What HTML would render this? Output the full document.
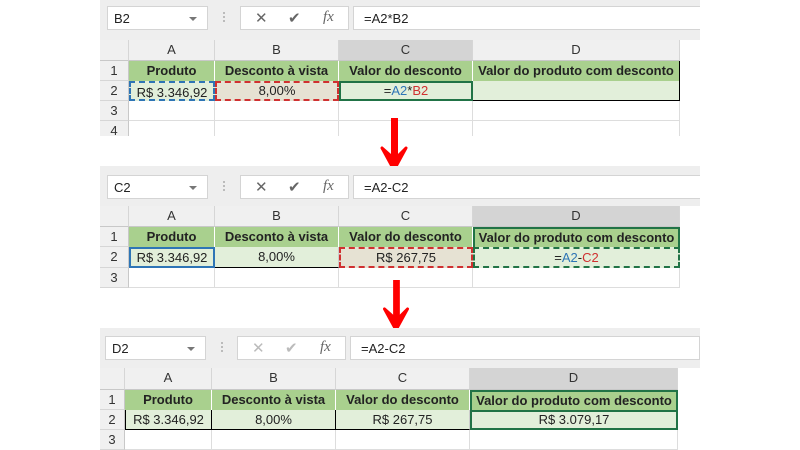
<!DOCTYPE html>
<html><head><meta charset="utf-8"><style>
*{margin:0;padding:0;box-sizing:border-box}
body{width:800px;height:450px;background:#fff;position:relative;overflow:hidden;font-family:"Liberation Sans",sans-serif;color:#222}
.p{position:absolute;left:100px;width:600px;background:#fff;overflow:hidden}
.tb{position:absolute;left:0;top:0;width:600px;height:40px;background:#eeeeee}
.nb{position:absolute;left:7px;top:6px;width:101px;height:24px;background:#fff;border:1px solid #d4d4d4;font-size:13px;padding:4px 0 0 6px}
.nb:after{content:"";position:absolute;right:10px;top:10px;border:4px solid transparent;border-top:4px solid #777}
.dots{position:absolute;left:123px;top:12px;width:2px;height:12px;background:repeating-linear-gradient(#bbb 0 2px,transparent 2px 4px)}
.bx{position:absolute;left:140px;top:6px;width:109px;height:24px;background:#fff;border:1px solid #d4d4d4;font-size:15px;color:#666}
.bx span{position:absolute;top:2px}
.fb{position:absolute;left:253px;top:6px;width:350px;height:24px;background:#fff;border:1px solid #d4d4d4;font-size:13px;padding:4px 0 0 10px}
.c{position:absolute;font-size:13px;text-align:center;line-height:20px;white-space:nowrap}
.ch{background:#f0f0f0;border-right:1px solid #d6d6d6;border-bottom:1px solid #c8c8c8;color:#333}
.rh{background:#f0f0f0;border-bottom:1px solid #d6d6d6;border-right:1px solid #c8c8c8;color:#333;left:0;width:29px}
.h{background:#a9d08e;font-weight:bold;border-right:1px solid #fff}
.d{background:#e2efda;border-right:1px solid #ccc}
.e{border-right:1px solid #ddd;border-bottom:1px solid #ddd}
.arrow{position:absolute;width:30px}
</style></head><body>

<!-- Panel 1 -->
<div class="p" style="top:0;height:136px">
<div class="tb"></div>
<div class="nb">B2</div><div class="dots"></div>
<div class="bx"><span style="left:14px">✕</span><span style="left:47px">✔</span><span style="left:82px;font-style:italic;font-family:'Liberation Serif',serif">fx</span></div>
<div class="fb">=A2*B2</div>
<div class="c ch" style="left:0;top:40px;width:29px;height:21px"></div>
<div class="c ch" style="left:29px;top:40px;width:86px;height:21px">A</div>
<div class="c ch" style="left:115px;top:40px;width:124px;height:21px">B</div>
<div class="c ch" style="left:239px;top:40px;width:134px;height:21px;background:#d4d4d4">C</div>
<div class="c ch" style="left:373px;top:40px;width:207px;height:21px">D</div>
<div class="c rh" style="top:61px;height:20px">1</div>
<div class="c rh" style="top:81px;height:20px">2</div>
<div class="c rh" style="top:101px;height:20px">3</div>
<div class="c rh" style="top:121px;height:20px">4</div>
<div class="c h" style="left:29px;top:61px;width:86px;height:20px">Produto</div>
<div class="c h" style="left:115px;top:61px;width:124px;height:20px">Desconto à vista</div>
<div class="c h" style="left:239px;top:61px;width:134px;height:20px">Valor do desconto</div>
<div class="c h" style="left:373px;top:61px;width:207px;height:20px;border-right:1px solid #000">Valor do produto com desconto</div>
<div class="c d" style="left:29px;top:81px;width:86px;height:20px;border:2px dashed #2e75b6">R$ 3.346,92</div>
<div class="c d" style="left:115px;top:81px;width:124px;height:20px;background:#e6e2d3;border:2px dashed #d03030;line-height:16px">8,00%</div>
<div class="c d" style="left:239px;top:81px;width:134px;height:20px;border:2px solid #217346;border-top-style:solid;line-height:16px">=<span style="color:#2e75b6">A2</span>*<span style="color:#d03030">B2</span></div>
<div class="c d" style="left:373px;top:81px;width:207px;height:20px;border-right:1px solid #000;border-bottom:1px solid #000"></div>
<div class="c e" style="left:29px;top:101px;width:86px;height:20px"></div>
<div class="c e" style="left:115px;top:101px;width:124px;height:20px"></div>
<div class="c e" style="left:239px;top:101px;width:134px;height:20px"></div>
<div class="c e" style="left:373px;top:101px;width:207px;height:20px"></div>
<div class="c e" style="left:29px;top:121px;width:86px;height:20px"></div>
<div class="c e" style="left:115px;top:121px;width:124px;height:20px"></div>
<div class="c e" style="left:239px;top:121px;width:134px;height:20px"></div>
<div class="c e" style="left:373px;top:121px;width:207px;height:20px"></div>
</div>

<!-- Arrow 1 -->
<svg class="arrow" style="left:379px;top:118px" width="30" height="54" viewBox="0 0 30 54"><rect x="12" y="0" width="7" height="40" fill="#f00"/><path d="M3 30 L15 52 L27 30 L19 38 L12 38 Z" fill="#f00" stroke="#f00" stroke-width="3" stroke-linejoin="round"/></svg>

<!-- Panel 2 -->
<div class="p" style="top:166px;height:124px">
<div class="tb"></div>
<div class="nb" style="top:9px">C2</div><div class="dots" style="top:15px"></div>
<div class="bx" style="top:9px"><span style="left:14px">✕</span><span style="left:47px">✔</span><span style="left:82px;font-style:italic;font-family:'Liberation Serif',serif">fx</span></div>
<div class="fb" style="top:9px">=A2-C2</div>
<div class="c ch" style="left:0;top:40px;width:29px;height:21px"></div>
<div class="c ch" style="left:29px;top:40px;width:86px;height:21px">A</div>
<div class="c ch" style="left:115px;top:40px;width:124px;height:21px">B</div>
<div class="c ch" style="left:239px;top:40px;width:134px;height:21px">C</div>
<div class="c ch" style="left:373px;top:40px;width:207px;height:21px;background:#d4d4d4">D</div>
<div class="c rh" style="top:61px;height:20px">1</div>
<div class="c rh" style="top:81px;height:21px">2</div>
<div class="c rh" style="top:102px;height:20px">3</div>
<div class="c h" style="left:29px;top:61px;width:86px;height:20px">Produto</div>
<div class="c h" style="left:115px;top:61px;width:124px;height:20px">Desconto à vista</div>
<div class="c h" style="left:239px;top:61px;width:134px;height:20px">Valor do desconto</div>
<div class="c h" style="left:373px;top:61px;width:207px;height:20px;border:2px solid #217346;border-bottom:none;line-height:18px">Valor do produto com desconto</div>
<div class="c d" style="left:29px;top:81px;width:86px;height:21px;border:2px solid #2e75b6;line-height:17px">R$ 3.346,92</div>
<div class="c d" style="left:115px;top:81px;width:124px;height:21px;border-bottom:1px solid #000">8,00%</div>
<div class="c d" style="left:239px;top:81px;width:134px;height:21px;background:#e6e2d3;border:2px dashed #d03030;line-height:17px">R$ 267,75</div>
<div class="c d" style="left:373px;top:81px;width:207px;height:21px;border:2px dashed #217346;line-height:17px">=<span style="color:#2e75b6">A2</span>-<span style="color:#d03030">C2</span></div>
<div class="c e" style="left:29px;top:102px;width:86px;height:20px"></div>
<div class="c e" style="left:115px;top:102px;width:124px;height:20px"></div>
<div class="c e" style="left:239px;top:102px;width:134px;height:20px"></div>
<div class="c e" style="left:373px;top:102px;width:207px;height:20px"></div>
</div>

<!-- Arrow 2 -->
<svg class="arrow" style="left:381px;top:280px" width="30" height="52" viewBox="0 0 30 54"><rect x="12" y="0" width="7" height="40" fill="#f00"/><path d="M3 30 L15 52 L27 30 L19 38 L12 38 Z" fill="#f00" stroke="#f00" stroke-width="3" stroke-linejoin="round"/></svg>

<!-- Panel 3 -->
<div class="p" style="top:328px;height:122px">
<div class="tb"></div>
<div class="nb" style="top:8px;left:5px">D2</div><div class="dots" style="top:14px;left:121px"></div>
<div class="bx" style="top:8px;left:137px;color:#bbb"><span style="left:14px">✕</span><span style="left:47px">✔</span><span style="left:82px;font-style:italic;color:#666;font-family:'Liberation Serif',serif">fx</span></div>
<div class="fb" style="top:8px;left:250px">=A2-C2</div>
<div class="c ch" style="left:0;top:40px;width:25px;height:22px"></div>
<div class="c ch" style="left:25px;top:40px;width:87px;height:22px">A</div>
<div class="c ch" style="left:112px;top:40px;width:124px;height:22px">B</div>
<div class="c ch" style="left:236px;top:40px;width:134px;height:22px">C</div>
<div class="c ch" style="left:370px;top:40px;width:208px;height:22px;background:#d4d4d4">D</div>
<div class="c rh" style="top:62px;height:20px;width:25px">1</div>
<div class="c rh" style="top:82px;height:20px;width:25px">2</div>
<div class="c rh" style="top:102px;height:20px;width:25px">3</div>
<div class="c h" style="left:25px;top:62px;width:87px;height:20px">Produto</div>
<div class="c h" style="left:112px;top:62px;width:124px;height:20px">Desconto à vista</div>
<div class="c h" style="left:236px;top:62px;width:134px;height:20px">Valor do desconto</div>
<div class="c h" style="left:370px;top:62px;width:208px;height:20px;border:2px solid #217346;border-bottom:none;line-height:18px">Valor do produto com desconto</div>
<div class="c d" style="left:25px;top:82px;width:87px;height:20px;border-bottom:1px solid #000;border-right:1px solid #000;border-left:1px solid #000">R$ 3.346,92</div>
<div class="c d" style="left:112px;top:82px;width:124px;height:20px;border-bottom:1px solid #000;border-right:1px solid #000">8,00%</div>
<div class="c d" style="left:236px;top:82px;width:134px;height:20px;border-bottom:1px solid #000">R$ 267,75</div>
<div class="c d" style="left:370px;top:82px;width:208px;height:20px;border:2px solid #217346;line-height:16px">R$ 3.079,17</div>
<div class="c e" style="left:25px;top:102px;width:87px;height:20px"></div>
<div class="c e" style="left:112px;top:102px;width:124px;height:20px"></div>
<div class="c e" style="left:236px;top:102px;width:134px;height:20px"></div>
<div class="c e" style="left:370px;top:102px;width:208px;height:20px"></div>
</div>
</body></html>
